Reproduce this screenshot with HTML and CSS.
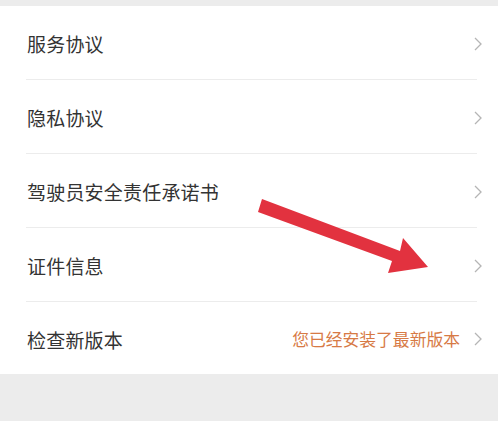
FILE: index.html
```html
<!DOCTYPE html>
<html lang="zh">
<head>
<meta charset="utf-8">
<link rel="stylesheet" href="styles.css">
</head>
<body>
<div class="page">
  <div class="list">
    <div class="row"><span class="label">服务协议</span><span class="right"><svg class="chev" viewBox="0 0 8 14"><polyline points="1,1 7,7 1,13"/></svg></span></div>
    <div class="sep"></div>
    <div class="row"><span class="label">隐私协议</span><span class="right"><svg class="chev" viewBox="0 0 8 14"><polyline points="1,1 7,7 1,13"/></svg></span></div>
    <div class="sep"></div>
    <div class="row"><span class="label">驾驶员安全责任承诺书</span><span class="right"><svg class="chev" viewBox="0 0 8 14"><polyline points="1,1 7,7 1,13"/></svg></span></div>
    <div class="sep"></div>
    <div class="row"><span class="label">证件信息</span><span class="right"><svg class="chev" viewBox="0 0 8 14"><polyline points="1,1 7,7 1,13"/></svg></span></div>
    <div class="sep"></div>
    <div class="row last"><span class="label">检查新版本</span><span class="right"><span class="note">您已经安装了最新版本</span><svg class="chev" viewBox="0 0 8 14"><polyline points="1,1 7,7 1,13"/></svg></span></div>
  </div>
  <svg class="arrow" viewBox="0 0 498 421"><polygon points="262,199 400,251 403,238 428,267 388,273 392,261 258,212"/></svg>
</div>
</body>
</html>
```

FILE: styles.css
```css
html, body {
  margin: 0;
  padding: 0;
  background: #ececec;
}
.page {
  position: relative;
  width: 498px;
  height: 421px;
  padding-top: 6px;
  box-sizing: border-box;
  font-family: "Noto Sans CJK SC", "Noto Sans", sans-serif;
}
.list {
  background: #ffffff;
  display: flex;
  flex-direction: column;
}
.row {
  height: 73px;
  box-sizing: border-box;
  padding: 2px 16px 0 27px;
  display: flex;
  align-items: center;
  justify-content: space-between;
}
.row.last {
  height: 72px;
}
.label {
  font-size: 19px;
  color: #333333;
  letter-spacing: 0.2px;
}
.right {
  display: flex;
  align-items: center;
  gap: 14px;
}
.note {
  font-size: 16.8px;
  color: #d77a45;
}
.chev {
  width: 8px;
  height: 14px;
  fill: none;
  stroke: #b5b5b5;
  stroke-width: 1.3;
}
.sep {
  height: 1px;
  background: #ececec;
  margin: 0 21px 0 26px;
}
.arrow {
  position: absolute;
  left: 0;
  top: 0;
  width: 498px;
  height: 421px;
  pointer-events: none;
}
.arrow polygon {
  fill: #e2323f;
}
```
